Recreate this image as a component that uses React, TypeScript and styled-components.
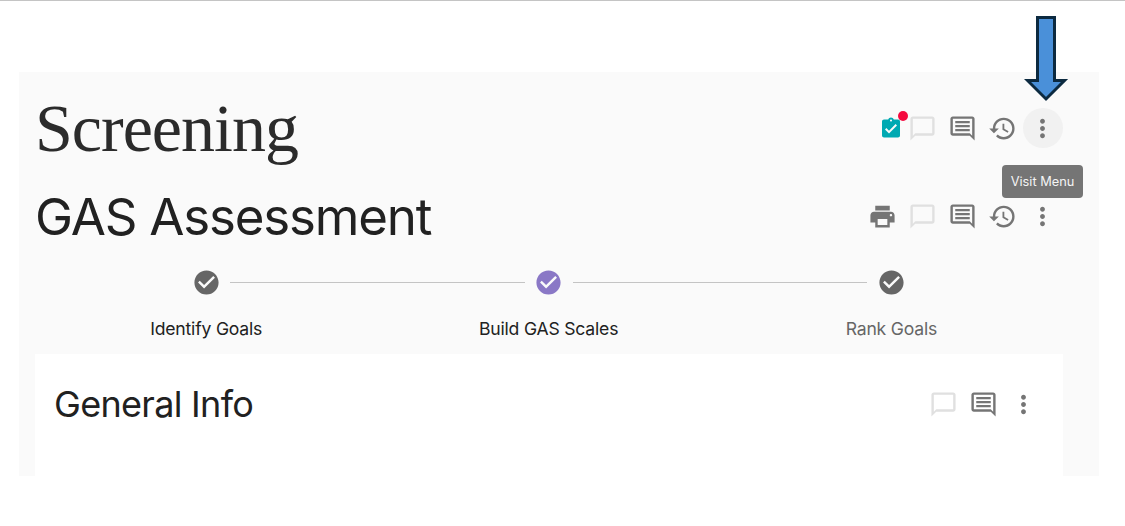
import React from 'react';
import styled, { createGlobalStyle } from 'styled-components';
import {
  MdAssignmentTurnedIn,
  MdChatBubbleOutline,
  MdCheckCircle,
  MdHistory,
  MdMoreVert,
  MdPrint,
} from 'react-icons/md';

const GlobalStyle = createGlobalStyle`
  html, body {
    margin: 0;
    padding: 0;
    background: #fff;
    font-family: Inter, "Liberation Sans", sans-serif;
  }
`;

const Page = styled.div`
  position: relative;
  width: 1125px;
  height: 526px;
  overflow: hidden;
  border-top: 1px solid #c4c4c4;
  box-sizing: border-box;
`;

const Panel = styled.main`
  width: 1080px;
  height: 404px;
  margin: 71px 0 0 19px;
  padding: 0 36px 0 16px;
  box-sizing: border-box;
  background: #fafafa;
  display: flex;
  flex-direction: column;
`;

const HeaderRow = styled.header<{ $height: number }>`
  height: ${({ $height }) => $height}px;
  display: flex;
  align-items: center;
  justify-content: space-between;
  flex: none;
`;

const PageTitle = styled.h1`
  margin: 0;
  font-family: "Liberation Serif", serif;
  font-weight: 400;
  font-size: 68px;
  line-height: 1;
  letter-spacing: -1px;
  color: #2b2b2b;
`;

const SectionTitle = styled.h2`
  margin: 0;
  font-weight: 400;
  font-size: 51px;
  line-height: 1;
  letter-spacing: -1.2px;
  color: #212121;
`;

const Toolbar = styled.div`
  display: flex;
  align-items: center;
  margin-right: 0.5px;
`;

const IconButton = styled.div<{ $active?: boolean; $muted?: boolean }>`
  position: relative;
  width: 40px;
  height: 40px;
  flex: none;
  display: flex;
  align-items: center;
  justify-content: center;
  border-radius: 50%;
  font-size: 29px;
  color: ${({ $muted }) => ($muted ? '#e0e0e0' : '#757575')};
  background: ${({ $active }) => ($active ? '#f1f1f1' : 'transparent')};
`;

const ClipboardButton = styled(IconButton)`
  width: 24px;
  font-size: 25px;
  color: #00a9b2;
`;

const Dot = styled.span`
  position: absolute;
  top: 3px;
  right: -5px;
  width: 10px;
  height: 10px;
  border-radius: 50%;
  background: #f50a3f;
`;

const Tooltip = styled.div`
  position: absolute;
  top: 57px;
  left: -20.5px;
  width: 81px;
  height: 33px;
  padding-bottom: 1px;
  box-sizing: border-box;
  display: flex;
  align-items: center;
  justify-content: center;
  border-radius: 4px;
  background: #757575;
  color: #f4f4f4;
  font-size: 12.8px;
  white-space: nowrap;
`;

const Stepper = styled.ol`
  list-style: none;
  margin: 20px 0 0;
  padding: 0;
  display: grid;
  grid-template-columns: 342.4px 342.4px 1fr;
  flex: none;
`;

const Step = styled.li`
  display: flex;
  flex-direction: column;
  align-items: center;
`;

const StepTrack = styled.div`
  width: 100%;
  height: 29px;
  display: flex;
  align-items: center;
`;

const Connector = styled.span<{ $hidden?: boolean }>`
  flex: 1;
  height: 1px;
  background: ${({ $hidden }) => ($hidden ? 'transparent' : '#c4c4c4')};
`;

const StepIcon = styled.span<{ $color: string }>`
  flex: none;
  display: flex;
  width: 29px;
  margin: 0 9.5px;
  font-size: 29px;
  color: ${({ $color }) => $color};
`;

const StepLabel = styled.span<{ $dim?: boolean }>`
  margin-top: 20px;
  font-size: 17.6px;
  line-height: 24px;
  font-weight: 400;
  letter-spacing: -0.2px;
  color: ${({ $dim }) => ($dim ? '#666' : '#212121')};
`;

const Card = styled.section`
  flex: 1;
  margin-top: 13px;
  padding: 0 19px;
  background: #fff;
`;

const CardTitle = styled.h3`
  margin: 0;
  font-weight: 400;
  font-size: 36px;
  line-height: 1;
  letter-spacing: -0.7px;
  color: #212121;
`;

const ArrowOverlay = styled.svg`
  position: absolute;
  top: 14px;
  left: 1024px;
`;

const NotesIcon = () => (
  <svg width="1em" height="1em" viewBox="0 0 24 24" fill="currentColor">
    <path d="M4 2h16c1.1 0 2 .9 2 2v18l-4-4H4c-1.1 0-2-.9-2-2V4c0-1.1.9-2 2-2zm0 14h14l2 2V4H4v12z" />
    <path d="M6 5.8h12v1.9H6zM6 9.1h12V11H6zM6 12.4h12v1.9H6z" />
  </svg>
);

const steps = [
  { label: 'Identify Goals', color: '#666666' },
  { label: 'Build GAS Scales', color: '#8a78c6' },
  { label: 'Rank Goals', color: '#666666', dim: true },
];

export default function App() {
  return (
    <Page>
      <GlobalStyle />
      <Panel>
        <HeaderRow $height={112}>
          <PageTitle>Screening</PageTitle>
          <Toolbar>
            <ClipboardButton>
              <MdAssignmentTurnedIn />
              <Dot />
            </ClipboardButton>
            <IconButton $muted>
              <MdChatBubbleOutline />
            </IconButton>
            <IconButton>
              <NotesIcon />
            </IconButton>
            <IconButton>
              <MdHistory />
            </IconButton>
            <IconButton $active>
              <MdMoreVert />
              <Tooltip>Visit Menu</Tooltip>
            </IconButton>
          </Toolbar>
        </HeaderRow>
        <HeaderRow $height={64}>
          <SectionTitle>GAS Assessment</SectionTitle>
          <Toolbar>
            <IconButton>
              <MdPrint />
            </IconButton>
            <IconButton $muted>
              <MdChatBubbleOutline />
            </IconButton>
            <IconButton>
              <NotesIcon />
            </IconButton>
            <IconButton>
              <MdHistory />
            </IconButton>
            <IconButton>
              <MdMoreVert />
            </IconButton>
          </Toolbar>
        </HeaderRow>
        <Stepper>
          {steps.map((step, i) => (
            <Step key={step.label}>
              <StepTrack>
                <Connector $hidden={i === 0} />
                <StepIcon $color={step.color}>
                  <MdCheckCircle />
                </StepIcon>
                <Connector $hidden={i === steps.length - 1} />
              </StepTrack>
              <StepLabel $dim={step.dim}>{step.label}</StepLabel>
            </Step>
          ))}
        </Stepper>
        <Card>
          <HeaderRow $height={100}>
            <CardTitle>General Info</CardTitle>
            <Toolbar>
              <IconButton $muted>
                <MdChatBubbleOutline />
              </IconButton>
              <IconButton>
                <NotesIcon />
              </IconButton>
              <IconButton>
                <MdMoreVert />
              </IconButton>
            </Toolbar>
          </HeaderRow>
        </Card>
      </Panel>
      <ArrowOverlay width="46" height="88" viewBox="0 0 46 88">
        <path
          d="M13.5 2.5h17v63h10L22 84 3.5 65.5h10z"
          fill="#4a90d9"
          stroke="#0c2a40"
          strokeWidth="3"
        />
      </ArrowOverlay>
    </Page>
  );
}
